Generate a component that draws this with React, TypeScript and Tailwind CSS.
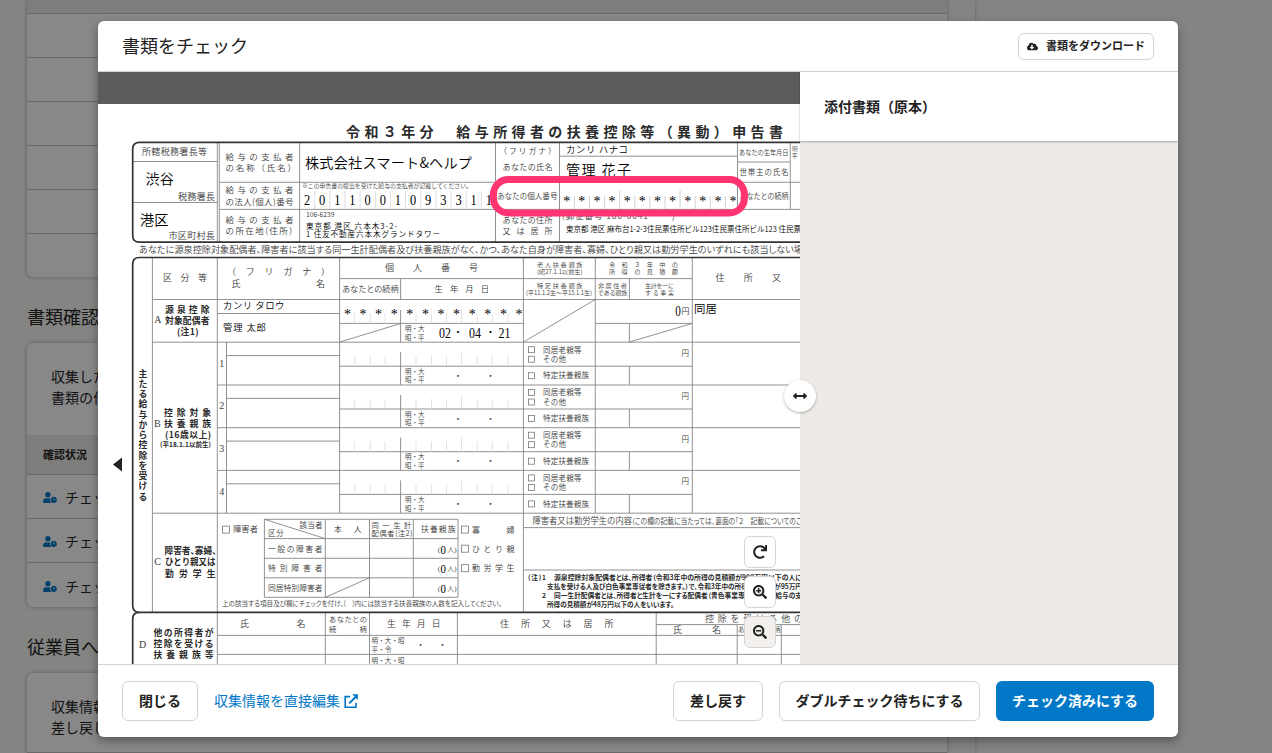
import type { ReactNode } from "react";
import {
  FaArrowsAltH,
  FaCloudDownloadAlt,
  FaRedo,
  FaSearchMinus,
  FaSearchPlus,
  FaUserClock,
} from "react-icons/fa";

type Tone = "print" | "input" | "bold";

const toneClass: Record<Tone, string> = {
  print: "fill-[#3c3c3c] font-[350]",
  input: "fill-[#000000] font-[350]",
  bold: "fill-[#2a2a2a] font-bold",
};

const advance = (text: string, size: number) =>
  [...text].reduce((sum, c) => sum + (c.charCodeAt(0) < 256 ? 0.5 : 1) * size, 0);

/* Form text set between x1 and x2, centred vertically on cy. */
function T({ x1, x2, cy, s, t, tone = "print", tight = false }: { x1: number; x2: number; cy: number; s: number; t: string; tone?: Tone; tight?: boolean }) {
  const w = x2 - x1;
  const single = [...t].length === 1;
  return (
    <text
      x={x1}
      y={cy + s * 0.37}
      fontSize={s}
      className={`${toneClass[tone]} ${tight ? "[font-feature-settings:'palt']" : ""}`}
      textLength={single ? undefined : w}
      lengthAdjust={advance(t, s) > w + 1 ? "spacingAndGlyphs" : "spacing"}
    >
      {t}
    </text>
  );
}

/* Centred single glyph (digits, asterisks, dots). */
function G({ x, cy, s, t, tone = "input", squeeze = 1 }: { x: number; cy: number; s: number; t: string; tone?: Tone; squeeze?: number }) {
  return (
    <text
      transform={`translate(${x} ${cy + s * 0.34}) scale(${squeeze} 1)`}
      fontSize={s}
      textAnchor="middle"
      className={`${toneClass[tone]} font-['Liberation_Serif','Noto_Sans_CJK_JP',serif]`}
    >
      {t}
    </text>
  );
}

function Box({ x, cy, s = 7 }: { x: number; cy: number; s?: number }) {
  return <rect x={x + 0.5} y={cy - s / 2} width={s} height={s} className="fill-none stroke-[#777]" strokeWidth={0.8} />;
}

const line = (x1: number, y1: number, x2: number, y2: number) => `M${x1} ${y1}L${x2} ${y2}`;

const rowTops = [342.2, 385, 427.7, 470.4];
const ticks = [354.7, 370.3, 385, 416, 431.5, 446.5, 461.5, 477.3, 492.3, 508];
const range = (n: number) => Array.from({ length: n }, (_, i) => i);

const gridLines = [
  // employer / employee block
  line(217.3, 142, 217.3, 242), line(219.3, 142, 219.3, 242), line(299.6, 142, 299.6, 242),
  line(495.5, 142, 495.5, 242), line(559.5, 142, 559.5, 242), line(737.5, 142, 737.5, 209.3), line(790.3, 142, 790.3, 209.3),
  line(133, 161.5, 217, 161.5), line(133, 202.5, 217, 202.5),
  line(219, 182.3, 800, 182.3), line(219, 209.4, 800, 209.4),
  line(560, 156.2, 737, 156.2), line(737, 162, 790, 162),
  // dependants table
  line(152.4, 258, 152.4, 612), line(217.3, 258, 217.3, 664), line(226.5, 342, 226.5, 513),
  line(339.6, 258, 339.6, 513), line(523.4, 258, 523.4, 612), line(595.3, 258, 595.3, 513), line(692.3, 258, 692.3, 513),
  line(400.6, 279, 400.6, 299.5), line(629.4, 279, 629.4, 299.5),
  line(400.6, 310, 400.6, 342), line(629.4, 323.4, 629.4, 342),
  line(339.6, 278.6, 692, 278.6), line(152.4, 299.5, 800, 299.5),
  line(217.3, 313.5, 339.6, 313.5), line(339.6, 323.4, 523.4, 323.4), line(595.3, 323.4, 692, 323.4),
  line(152.4, 342.2, 800, 342.2), line(217.3, 385, 800, 385), line(217.3, 427.7, 800, 427.7),
  line(217.3, 470.4, 800, 470.4), line(152.4, 513.2, 800, 513.2),
  line(340, 342, 400.6, 323.5), line(523.5, 342, 595.3, 299.5), line(629.5, 342, 692, 323.5),
  // section C
  line(264.4, 519.3, 458, 519.3), line(264.4, 538.6, 458, 538.6), line(264.4, 558.3, 458, 558.3),
  line(264.4, 577.8, 458, 577.8), line(264.4, 597.3, 458, 597.3),
  line(264.4, 519.3, 264.4, 597.3), line(325.3, 519.3, 325.3, 597.3), line(369.5, 519.3, 369.5, 597.3),
  line(413.3, 519.3, 413.3, 597.3), line(458, 519.3, 458, 597.3),
  line(264.4, 519.3, 325.3, 538.6), line(325.3, 597.3, 369.5, 577.8),
  line(523.4, 527.6, 800, 527.6), line(523.4, 570, 800, 570),
  // section D
  line(325.3, 613, 325.3, 664), line(369.5, 613, 369.5, 664), line(457.4, 613, 457.4, 664),
  line(656.2, 613, 656.2, 664), line(737.2, 624.6, 737.2, 664), line(781.3, 624.6, 781.3, 664),
  line(656.2, 624.6, 800, 624.6), line(217.3, 635.4, 800, 635.4), line(217.3, 654.4, 800, 654.4),
].join("");

function FormDocument() {
  return (
    <svg
      viewBox="98 104 702 560"
      className="block h-[560px] w-[702px] bg-white font-['Noto_Sans_CJK_JP',sans-serif]"
      role="img"
    >
      <path d={gridLines} className="fill-none stroke-[#868686]" strokeWidth={0.9} />
      {rowTops.map((y) => (
        <path
          key={y}
          d={line(226.5, y + 13.4, 339.6, y + 13.4) + line(339.6, y + 24, 692.3, y + 24) + line(400.6, y + 10, 400.6, y + 42.7) + line(629.4, y + 24, 629.4, y + 42.7)}
          className="fill-none stroke-[#868686]"
          strokeWidth={0.9}
        />
      ))}
      {[299.4, ...rowTops].map((y) =>
        ticks.map((x) => (
          <path key={`${y}-${x}`} d={line(x, y + (x === 461.5 ? 10 : 14), x, y + 24)} className="stroke-[#dcdcdc]" strokeWidth={0.8} />
        )),
      )}
      {range(12).map((i) => (
        <path key={i} d={line(314.7 + i * 15.15, 191, 314.7 + i * 15.15, 209)} className="stroke-[#d4d4d4]" strokeWidth={0.8} />
      ))}
      {range(11).map((i) => (
        <path key={i} d={line(574.4 + i * 15.1, i % 4 === 3 ? 190 : 196, 574.4 + i * 15.1, 209)} className="stroke-[#c8c8c8]" strokeWidth={0.8} />
      ))}

      <g className="fill-none stroke-[#333333]" strokeWidth={1.7}>
        <path d="M800 142.3H139.5Q132.7 142.3 132.7 149V235.5Q132.7 242.2 139.5 242.2H800" />
        <path d="M800 257.5H139.5Q132.7 257.5 132.7 264V605.5Q132.7 612.4 139.5 612.4H800" />
        <path d="M139.5 612.4Q132.7 612.4 132.7 619V664" />
      </g>
      <path d="M113 464.5L122 457.5V471.5Z" className="fill-[#222222]" />

      <T tone="bold" x1={346} x2={783} cy={132} s={14} t="令和３年分　給与所得者の扶養控除等（異動）申告書" />

      <T x1={142} x2={207} cy={152} s={9} t="所轄税務署長等" />
      <T tone="input" x1={145.5} x2={174} cy={179} s={14.2} t="渋谷" />
      <T x1={178} x2={215} cy={196.5} s={9.2} t="税務署長" />
      <T tone="input" x1={140} x2={168.5} cy={219.5} s={14.2} t="港区" />
      <T x1={168.5} x2={215} cy={235.5} s={9.2} t="市区町村長" />
      <T x1={225.5} x2={293.5} cy={156.5} s={8.5} t="給与の支払者" />
      <T x1={225.5} x2={296} cy={167.5} s={8.5} t="の名称（氏名）" />
      <T x1={225.5} x2={293.5} cy={190.3} s={8.5} t="給与の支払者" />
      <T x1={225.5} x2={293.5} cy={201.5} s={8.5} t="の法人(個人)番号" />
      <T x1={225.5} x2={293.5} cy={220} s={8.5} t="給与の支払者" />
      <T x1={225.5} x2={292} cy={231.3} s={8.5} t="の所在地(住所)" />
      <T tone="input" x1={305} x2={472} cy={163} s={14.2} t="株式会社スマート&ヘルプ" />
      <T x1={302} x2={472} cy={186} s={6} t="※この申告書の提出を受けた給与の支払者が記載してください。" />
      {[..."2011001093311"].map((d, i) => (
        <G key={i} x={307 + i * 15.15} cy={199.3} s={15.5} squeeze={0.8} t={d} />
      ))}
      <T x1={306} x2={334.5} cy={214} s={7} t="106-6239" />
      <T tone="input" x1={306} x2={397} cy={226.3} s={7.6} t="東京都 港区 六本木3-2-" />
      <T tone="input" x1={306} x2={440} cy={234.6} s={7.6} t="1 住友不動産六本木グランドタワー" />

      <T x1={499} x2={556} cy={151} s={8} t="（フリガナ）" />
      <T x1={502.5} x2={552.5} cy={167.3} s={8} t="あなたの氏名" />
      <T tone="input" x1={566} x2={628} cy={149.3} s={9.4} t="カンリ ハナコ" />
      <T tone="input" x1={566} x2={631} cy={170} s={14} t="管理 花子" />
      <T x1={739} x2={788.5} cy={152.5} s={7} t="あなたの生年月日" />
      <T x1={739.5} x2={788.5} cy={172.2} s={7.5} t="世帯主の氏名" />
      <T x1={792} x2={798} cy={148.5} s={5.5} t="明" />
      <T x1={792} x2={798} cy={155.5} s={5.5} t="平" />
      <T x1={497} x2={557.5} cy={196} s={7.8} t="あなたの個人番号" />
      {range(12).map((i) => (
        <G key={i} x={566.7 + i * 15.12} cy={200.8} s={14} t="*" />
      ))}
      <T x1={739.5} x2={788.5} cy={196.3} s={7.5} t="あなたとの続柄" />
      <T x1={502.5} x2={552.5} cy={220} s={8} t="あなたの住所" />
      <T x1={502.5} x2={552.5} cy={231.5} s={8} t="又は居所" />
      <T x1={562} x2={648} cy={216.3} s={8.5} t="(郵便番号 106-0041" />
      <T x1={672} x2={676} cy={216.3} s={8} t=")" />
      <T tone="input" x1={566} x2={801} cy={229.5} s={7.5} t="東京都 港区 麻布台1-2-3住民票住所ビル123住民票住所ビル123 住民票" />
      <T tight x1={139} x2={803} cy={249.6} s={9.3} t="あなたに源泉控除対象配偶者、障害者に該当する同一生計配偶者及び扶養親族がなく、かつ、あなた自身が障害者、寡婦、ひとり親又は勤労学生のいずれにも該当しない場" />
      <rect x={493.4} y={179.5} width={251} height={33.5} rx={15} className="fill-none stroke-[#ff3471]" strokeWidth={7} />

      {[..."主たる給与から控除を受ける"].map((c, i) => (
        <G key={i} tone="bold" x={142.8} cy={373.7 + i * 10.25} s={8.8} t={c} />
      ))}
      <T x1={163} x2={207} cy={278} s={9} t="区分等" />
      <T x1={227} x2={330} cy={272} s={9} t="（フリガナ）" />
      <T x1={231.5} x2={240} cy={284} s={9} t="氏" />
      <T x1={316} x2={325} cy={284} s={9} t="名" />
      <T x1={385} x2={478} cy={268} s={9} t="個人番号" />
      <T x1={342} x2={398.5} cy={289} s={8.3} t="あなたとの続柄" />
      <T x1={434.5} x2={489} cy={289} s={8.3} t="生年月日" />
      <T x1={537} x2={582.5} cy={264.5} s={6.2} t="老人扶養親族" />
      <T x1={537} x2={582.5} cy={271.5} s={6.2} t="(昭27.1.1以前生)" />
      <T x1={537} x2={582.5} cy={285.5} s={6.2} t="特定扶養親族" />
      <T x1={526} x2={592} cy={293} s={6.2} t="(平11.1.2生～平15.1.1生)" />
      <T x1={609} x2={678} cy={264.5} s={6.2} t="令和３年中の" />
      <T x1={609} x2={678} cy={271.5} s={6.2} t="所得の見積額" />
      <T x1={598} x2={627} cy={286} s={6.2} t="非居住者" />
      <T x1={597.5} x2={627.5} cy={293} s={6.2} t="である親族" />
      <T x1={645} x2={674} cy={286} s={6} t="生計を一に" />
      <T x1={645} x2={674} cy={293} s={6} t="する事実" />
      <T x1={715.5} x2={781} cy={278} s={9} t="住所又" />

      <G tone="print" x={157.8} cy={319.5} s={10} t="A" />
      <T tone="bold" x1={165} x2={209.5} cy={309.7} s={8.8} t="源泉控除" />
      <T tone="bold" x1={165} x2={209.5} cy={320.8} s={8.8} t="対象配偶者" />
      <T tone="bold" x1={177} x2={198.5} cy={331.7} s={8.8} t="(注1)" />
      <T tone="input" x1={223} x2={284.5} cy={306} s={9.4} t="カンリ タロウ" />
      <T tone="input" x1={223} x2={266} cy={327.5} s={9.4} t="管理 太郎" />
      {range(12).map((i) => (
        <G key={i} x={347.4 + i * 15.6} cy={314.6} s={14} t="*" />
      ))}
      <T x1={405} x2={424.5} cy={329} s={6.5} t="明・大" />
      <T x1={405} x2={424.5} cy={337.3} s={6.5} t="昭・平" />
      <G x={445} cy={333} s={14} squeeze={0.85} t="02" />
      <G x={458} cy={333} s={10} t="・" />
      <G x={475} cy={333} s={14} squeeze={0.85} t="04" />
      <G x={490.5} cy={333} s={10} t="・" />
      <G x={504.5} cy={333} s={14} squeeze={0.85} t="21" />
      <G x={678} cy={311} s={14} squeeze={0.8} t="0" />
      <T x1={681.5} x2={690} cy={311.3} s={8} t="円" />
      <T tone="input" x1={694} x2={716.8} cy={308.7} s={11.4} t="同居" />

      <G tone="print" x={157.4} cy={424} s={10} t="B" />
      <T tone="bold" x1={164} x2={211} cy={412.5} s={8.8} t="控除対象" />
      <T tone="bold" x1={164} x2={211} cy={423.7} s={8.8} t="扶養親族" />
      <T tone="bold" x1={165} x2={211} cy={434.7} s={8.8} t="(16歳以上)" />
      <T tone="bold" x1={160} x2={211} cy={444.2} s={6.5} t="(平18.1.1以前生)" />
      {rowTops.map((y, i) => (
        <g key={y}>
          <G tone="print" x={221.8} cy={y + 21} s={10} t={String(i + 1)} />
          <T x1={405} x2={424.5} cy={y + 29.3} s={6.5} t="明・大" />
          <T x1={405} x2={424.5} cy={y + 37.8} s={6.5} t="昭・平" />
          <G x={458} cy={y + 33.5} s={9} t="・" tone="print" />
          <G x={490.5} cy={y + 33.5} s={9} t="・" tone="print" />
          <Box x={528} cy={y + 7.5} s={6} />
          <Box x={528} cy={y + 17} s={6} />
          <Box x={528} cy={y + 33.5} s={6} />
          <T x1={543} x2={581.5} cy={y + 7.6} s={7.5} t="同居老親等" />
          <T x1={543} x2={566} cy={y + 17} s={7.5} t="その他" />
          <T x1={543} x2={589} cy={y + 33.5} s={7.5} t="特定扶養親族" />
          <T x1={681.5} x2={689} cy={y + 11.3} s={7.5} t="円" />
        </g>
      ))}

      <G tone="print" x={157.5} cy={562} s={10} t="C" />
      <T tight tone="bold" x1={164.5} x2={216.5} cy={551} s={9} t="障害者、寡婦、" />
      <T tone="bold" x1={165} x2={215.5} cy={562} s={8.8} t="ひとり親又は" />
      <T tone="bold" x1={165} x2={215.5} cy={573.3} s={8.8} t="勤労学生" />
      <Box x={222} cy={529.6} />
      <T x1={233} x2={258} cy={529.4} s={8.3} t="障害者" />
      <T x1={299.5} x2={322.5} cy={525} s={7.6} t="該当者" />
      <T x1={268} x2={283.5} cy={533.5} s={7.6} t="区分" />
      <T x1={334} x2={361.5} cy={529.5} s={7.8} t="本人" />
      <T x1={371.5} x2={411.5} cy={525} s={7.4} t="同一生計" />
      <T x1={371.5} x2={412.5} cy={533.5} s={7.4} t="配偶者(注2)" />
      <T x1={421} x2={455.5} cy={529.5} s={7.8} t="扶養親族" />
      <T x1={268} x2={322.5} cy={548.7} s={7.8} t="一般の障害者" />
      <T x1={268} x2={322.5} cy={568.2} s={7.8} t="特別障害者" />
      <T x1={268} x2={322.5} cy={587.7} s={7.8} t="同居特別障害者" />
      {[549.2, 568.9, 588.4].map((y) => (
        <g key={y}>
          <G tone="print" x={439} cy={y} s={7} t="(" />
          <G x={443.3} cy={y} s={13.5} squeeze={0.8} t="0" />
          <T x1={447.5} x2={454} cy={y} s={6.5} t="人" />
          <G tone="print" x={455.3} cy={y} s={7} t=")" />
        </g>
      ))}
      <Box x={461} cy={529.6} />
      <T x1={472} x2={514.5} cy={529.6} s={8} t="寡婦" />
      <Box x={461} cy={548.7} />
      <T x1={472} x2={514.5} cy={548.7} s={8} t="ひとり親" />
      <Box x={461} cy={568.2} />
      <T x1={472} x2={514.5} cy={568.2} s={8} t="勤労学生" />
      <T tight x1={222} x2={502} cy={603.8} s={6.9} t="上の該当する項目及び欄にチェックを付け、(　)内には該当する扶養親族の人数を記入してください。" />
      <T x1={532.5} x2={632} cy={521} s={9} t="障害者又は勤労学生の内容" />
      <T tight x1={632.5} x2={802} cy={521.3} s={7.5} t="(この欄の記載に当たっては、裏面の「２　記載についてのご" />
      <T tone="bold" x1={528} x2={546} cy={577.7} s={6.6} t="(注)1" />
      <T tight tone="bold" x1={554} x2={802} cy={577.7} s={6.8} t="源泉控除対象配偶者とは、所得者（令和3年中の所得の見積額が900万円以下の人に" />
      <T tight tone="bold" x1={547} x2={802} cy={586.8} s={6.8} t="支払を受ける人及び白色事業専従者を除きます。）で、令和3年中の所得の見積額が95万円" />
      <T tone="bold" x1={542} x2={546} cy={595.8} s={6.8} t="2" />
      <T tight tone="bold" x1={554} x2={802} cy={595.8} s={6.8} t="同一生計配偶者とは、所得者と生計を一にする配偶者（青色事業専従者として給与の支" />
      <T tight tone="bold" x1={547} x2={674} cy={604.8} s={6.8} t="所得の見積額が48万円以下の人をいいます。" />

      <G tone="print" x={142.5} cy={644.3} s={10} t="D" />
      <T tone="bold" x1={153.5} x2={213.5} cy={632.7} s={8.8} t="他の所得者が" />
      <T tone="bold" x1={153.5} x2={213.5} cy={643.9} s={8.8} t="控除を受ける" />
      <T tone="bold" x1={153.5} x2={213.5} cy={655} s={8.8} t="扶養親族等" />
      <T x1={240} x2={249} cy={624} s={9} t="氏" />
      <T x1={296.5} x2={305} cy={624} s={9} t="名" />
      <T x1={329} x2={367} cy={619.5} s={7.3} t="あなたとの" />
      <T x1={329} x2={336.5} cy={629.3} s={7.3} t="続" />
      <T x1={359.5} x2={367} cy={629.3} s={7.3} t="柄" />
      <T x1={387} x2={440.5} cy={624} s={8.8} t="生年月日" />
      <T x1={500} x2={613.5} cy={624} s={9} t="住所又は居所" />
      <T x1={705} x2={803} cy={618.6} s={9} t="控除を受ける他の" />
      <T x1={673} x2={682} cy={630} s={9} t="氏" />
      <T x1={712} x2={720.5} cy={630} s={9} t="名" />
      <T x1={738} x2={744} cy={630} s={6.5} t="あ" />
      <T x1={774} x2={780} cy={630} s={6.5} t="柄" />
      <T x1={371.5} x2={404.5} cy={641} s={6.5} t="明・大・昭" />
      <T x1={371.5} x2={391.5} cy={649.3} s={6.5} t="平・令" />
      <T x1={371.5} x2={404.5} cy={660.5} s={6.5} t="明・大・昭" />
      <G tone="print" x={420.5} cy={645} s={9} t="・" />
      <G tone="print" x={442.5} cy={645} s={9} t="・" />
    </svg>
  );
}

function BackgroundPage() {
  return (
    <div className="flex h-full bg-[#f8f7f6] text-[#23221e]">
      <div className="flex w-[975px] flex-col pl-[27px] shadow-[0_0_3px_rgba(0,0,0,0.25)]">
        <div className="h-[277px] w-[920px] shrink-0 overflow-hidden rounded-b-md bg-white shadow-[0_0_4px_rgba(0,0,0,0.3)]">
          <div className="h-[14px] border-b border-[#c4c2bf] bg-[#edebe8]" />
          {range(5).map((i) => (
            <div key={i} className="h-[44px] border-b border-[#c4c2bf]" />
          ))}
        </div>
        <h2 className="mt-[25px] h-[28px] shrink-0 text-lg leading-7">書類確認</h2>
        <div className="mt-[13px] h-[264px] w-[920px] shrink-0 overflow-hidden rounded-md bg-white shadow-[0_0_4px_rgba(0,0,0,0.3)]">
          <div className="h-[92px] px-6 pt-[23px] text-sm leading-[21px]">
            <p>収集した</p>
            <p>書類の作</p>
          </div>
          <div className="flex h-[40px] items-center border-b border-[#c4c2bf] bg-[#edebe8] px-4 text-[11px] font-bold">確認状況</div>
          {range(3).map((i) => (
            <div key={i} className="flex h-[44px] items-center gap-2 border-b border-[#c4c2bf] px-4 pt-px text-sm last:border-b-0">
              <FaUserClock className="mt-px h-[11px] w-[14px] text-[#0077c7]" />
              チェック
            </div>
          ))}
        </div>
        <h2 className="mt-[25px] h-[28px] shrink-0 text-lg leading-7">従業員へ</h2>
        <div className="mt-[13px] h-[80px] w-[920px] shrink-0 rounded-t-md border-b border-[#c4c2bf] bg-white px-6 pt-[23px] text-sm leading-[21px] shadow-[0_0_4px_rgba(0,0,0,0.3)]">
          <p>収集情報</p>
          <p>差し戻し</p>
        </div>
      </div>
    </div>
  );
}

function Button({ className, children }: { className: string; children: ReactNode }) {
  return (
    <button className={`flex shrink-0 items-center justify-center whitespace-nowrap rounded-md border border-[#d6d3d0] font-bold ${className}`}>
      {children}
    </button>
  );
}

function OpenInNewIcon() {
  return (
    <svg viewBox="0 0 14 14" className="mt-0.5 h-3.5 w-3.5" fill="none" stroke="currentColor">
      <path d="M6 2.6H1.2V13.2H12V8.8" strokeWidth="1.6" />
      <path d="M5.2 9.4L11.8 2.8" strokeWidth="2" />
      <path d="M8.3 0.3H13.9V5.9Z" fill="currentColor" stroke="none" />
    </svg>
  );
}

export default function App() {
  return (
    <div className="relative h-[753px] w-[1272px] overflow-hidden font-['Noto_Sans_CJK_JP',sans-serif] text-[#23221e]">
      <BackgroundPage />
      <div className="absolute inset-0 bg-[rgba(3,3,2,0.47)] px-[98px] pt-[21px]">
        <div className="flex h-[716px] w-[1080px] flex-col overflow-hidden rounded-md bg-white shadow-[0_4px_10px_rgba(3,3,2,0.35)]">
          <header className="flex h-[51px] shrink-0 items-center justify-between border-b border-[#d6d3d0] px-6">
            <h1 className="pb-[3px] text-lg leading-none">書類をチェック</h1>
            <Button className="h-[27px] w-[136px] gap-2 bg-white text-[11px]">
              <FaCloudDownloadAlt className="h-[11px] w-[11px]" />
              <span className="pb-px">書類をダウンロード</span>
            </Button>
          </header>
          <div className="relative flex h-[592px] shrink-0">
            <section className="w-[702px] shrink-0 overflow-hidden">
              <div className="h-8 bg-[#5c5c5c]" />
              <FormDocument />
            </section>
            <section className="flex grow flex-col bg-[#edeae7]">
              <div className="flex h-[69px] items-center bg-white px-6 pb-0.5 text-sm font-bold shadow-[0_1px_2px_rgba(3,3,2,0.3)]">
                添付書類（原本）
              </div>
            </section>
            <div className="absolute left-[646px] top-[464px] flex flex-col gap-2">
              <Button className="h-8 w-8 bg-white"><FaRedo className="h-3.5 w-3.5" /></Button>
              <Button className="h-8 w-8 bg-white"><FaSearchPlus className="h-3.5 w-3.5" /></Button>
              <Button className="h-8 w-8 bg-[#f2f1f0]"><FaSearchMinus className="h-3.5 w-3.5" /></Button>
            </div>
            <button className="absolute left-[686px] top-[308px] flex h-8 w-8 items-center justify-center rounded-full bg-white shadow-[0_1px_3px_rgba(3,3,2,0.3)]">
              <FaArrowsAltH className="h-3.5 w-3.5" />
            </button>
          </div>
          <footer className="flex h-[73px] shrink-0 items-center border-t border-[#d6d3d0] px-6 text-sm">
            <Button className="h-10 w-[76px] bg-white pb-0.5">閉じる</Button>
            <a className="ml-4 flex items-center gap-1 pb-0.5 text-[#0077c7]">
              収集情報を直接編集
              <OpenInNewIcon />
            </a>
            <div className="ml-auto flex gap-4">
              <Button className="h-10 w-[90px] bg-white pb-0.5">差し戻す</Button>
              <Button className="h-10 w-[201px] bg-white pb-0.5">ダブルチェック待ちにする</Button>
              <button className="h-10 w-[158px] rounded-md bg-[#0077c7] pb-0.5 font-bold text-white">チェック済みにする</button>
            </div>
          </footer>
        </div>
      </div>
    </div>
  );
}
